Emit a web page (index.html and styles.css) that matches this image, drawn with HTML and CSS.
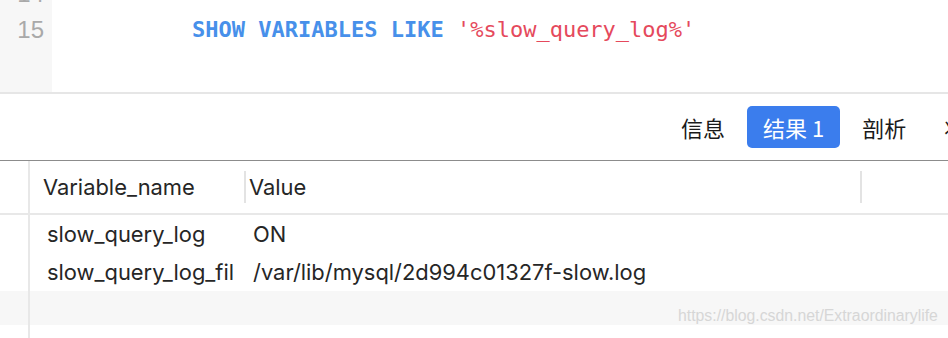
FILE: index.html
```html
<!DOCTYPE html>
<html lang="zh-CN">
<head>
<meta charset="utf-8">
<title>Navicat 查询</title>
<link rel="stylesheet" href="styles.css">
</head>
<body>
<div class="app">
  <div class="editor">
    <div class="gutter">
      <div class="ln">14</div>
      <div class="ln">15</div>
    </div>
    <div class="code">
      <div class="cl">&nbsp;</div>
      <div class="cl"><span class="kw">SHOW VARIABLES LIKE</span> <span class="str">'%slow_query_log%'</span></div>
    </div>
  </div>
  <div class="toolbar">
    <div class="tab">信息</div>
    <div class="tab active">结果 1</div>
    <div class="tab">剖析</div>
    <div class="tab">状态</div>
  </div>
  <div class="grid">
    <div class="hrow">
      <div class="rownum"></div>
      <div class="hcell c1">Variable_name</div>
      <div class="sep"></div>
      <div class="hcell c2">Value</div>
      <div class="sep"></div>
      <div class="hcell rest"></div>
    </div>
    <div class="row">
      <div class="rownum"></div>
      <div class="cell c1">slow_query_log</div>
      <div class="cell c2">ON</div>
    </div>
    <div class="row">
      <div class="rownum"></div>
      <div class="cell c1" title="slow_query_log_file">slow_query_log_fil</div>
      <div class="cell c2">/var/lib/mysql/2d994c01327f-slow.log</div>
    </div>
    <div class="row alt">
      <div class="rownum"></div>
      <div class="cell c1"></div>
      <div class="cell c2"></div>
    </div>
    <div class="row tail">
      <div class="rownum"></div>
    </div>
  </div>
  <div class="watermark">https://blog.csdn.net/Extraordinarylife</div>
</div>
</body>
</html>
```
FILE: styles.css
```css
html, body {
  margin: 0;
  padding: 0;
  background: #ffffff;
}
.app {
  position: relative;
  width: 948px;
  height: 338px;
  overflow: hidden;
  font-family: "Inter", "Noto Sans CJK SC", sans-serif;
  color: #262626;
}
.editor {
  display: flex;
  height: 92px;
  border-bottom: 2px solid #e6e6e6;
  overflow: hidden;
}
.gutter {
  flex: none;
  width: 44px;
  padding-right: 8px;
  background: #f7f7f7;
  text-align: right;
  font-family: "Liberation Sans", sans-serif;
  font-size: 24px;
  color: #a9a9a9;
}
.ln, .cl {
  height: 36px;
  line-height: 36px;
}
.gutter .ln:first-child, .code .cl:first-child {
  margin-top: -24px;
}
.code {
  flex: 1;
  padding-left: 140px;
  font-family: "DejaVu Sans Mono", monospace;
  font-size: 22px;
}
.cl {
  white-space: pre;
}
.kw {
  color: #4790ea;
  font-weight: bold;
}
.str {
  color: #e5495c;
}
.toolbar {
  display: flex;
  align-items: center;
  gap: 6px;
  height: 66px;
  padding-left: 665px;
  border-bottom: 1px solid #8c8c8c;
  overflow: hidden;
  white-space: nowrap;
}
.tab {
  flex: none;
  padding: 0 16px;
  height: 42px;
  line-height: 42px;
  border-radius: 5px;
  font-family: "Noto Sans CJK SC", sans-serif;
  font-size: 22px;
  color: #1a1a1a;
}
.tab.active {
  background: #3b7ded;
  color: #ffffff;
}
.grid {
  display: flex;
  flex-direction: column;
  font-size: 21.9px;
}
.hrow, .row {
  display: flex;
}
.hrow {
  height: 52px;
  align-items: center;
  border-bottom: 2px solid #e8e8e8;
}
.rownum {
  flex: none;
  width: 28px;
  align-self: stretch;
  border-right: 2px solid #e8e8e8;
}
.hcell {
  flex: none;
  white-space: nowrap;
  overflow: hidden;
}
.hcell.c1 {
  width: 201px;
  padding-left: 13px;
}
.hcell.c2 {
  width: 611px;
  padding-left: 3px;
}
.hcell.rest {
  flex: 1;
}
.sep {
  flex: none;
  width: 2px;
  height: 32px;
  background: #e3e3e3;
}
.row {
  height: 38px;
  align-items: center;
}
.cell {
  flex: none;
  white-space: nowrap;
  overflow: hidden;
}
.cell.c1 {
  width: 194px;
  padding-left: 17px;
  margin-right: 5px;
}
.cell.c2 {
  padding-left: 7px;
}
.row.alt {
  height: 34px;
  background: #f7f7f7;
}
.row.tail {
  height: 20px;
}
.watermark {
  position: absolute;
  left: 678px;
  top: 307px;
  font-family: "Liberation Sans", sans-serif;
  font-size: 15.8px;
  color: #d6d6d6;
  white-space: nowrap;
}
```
